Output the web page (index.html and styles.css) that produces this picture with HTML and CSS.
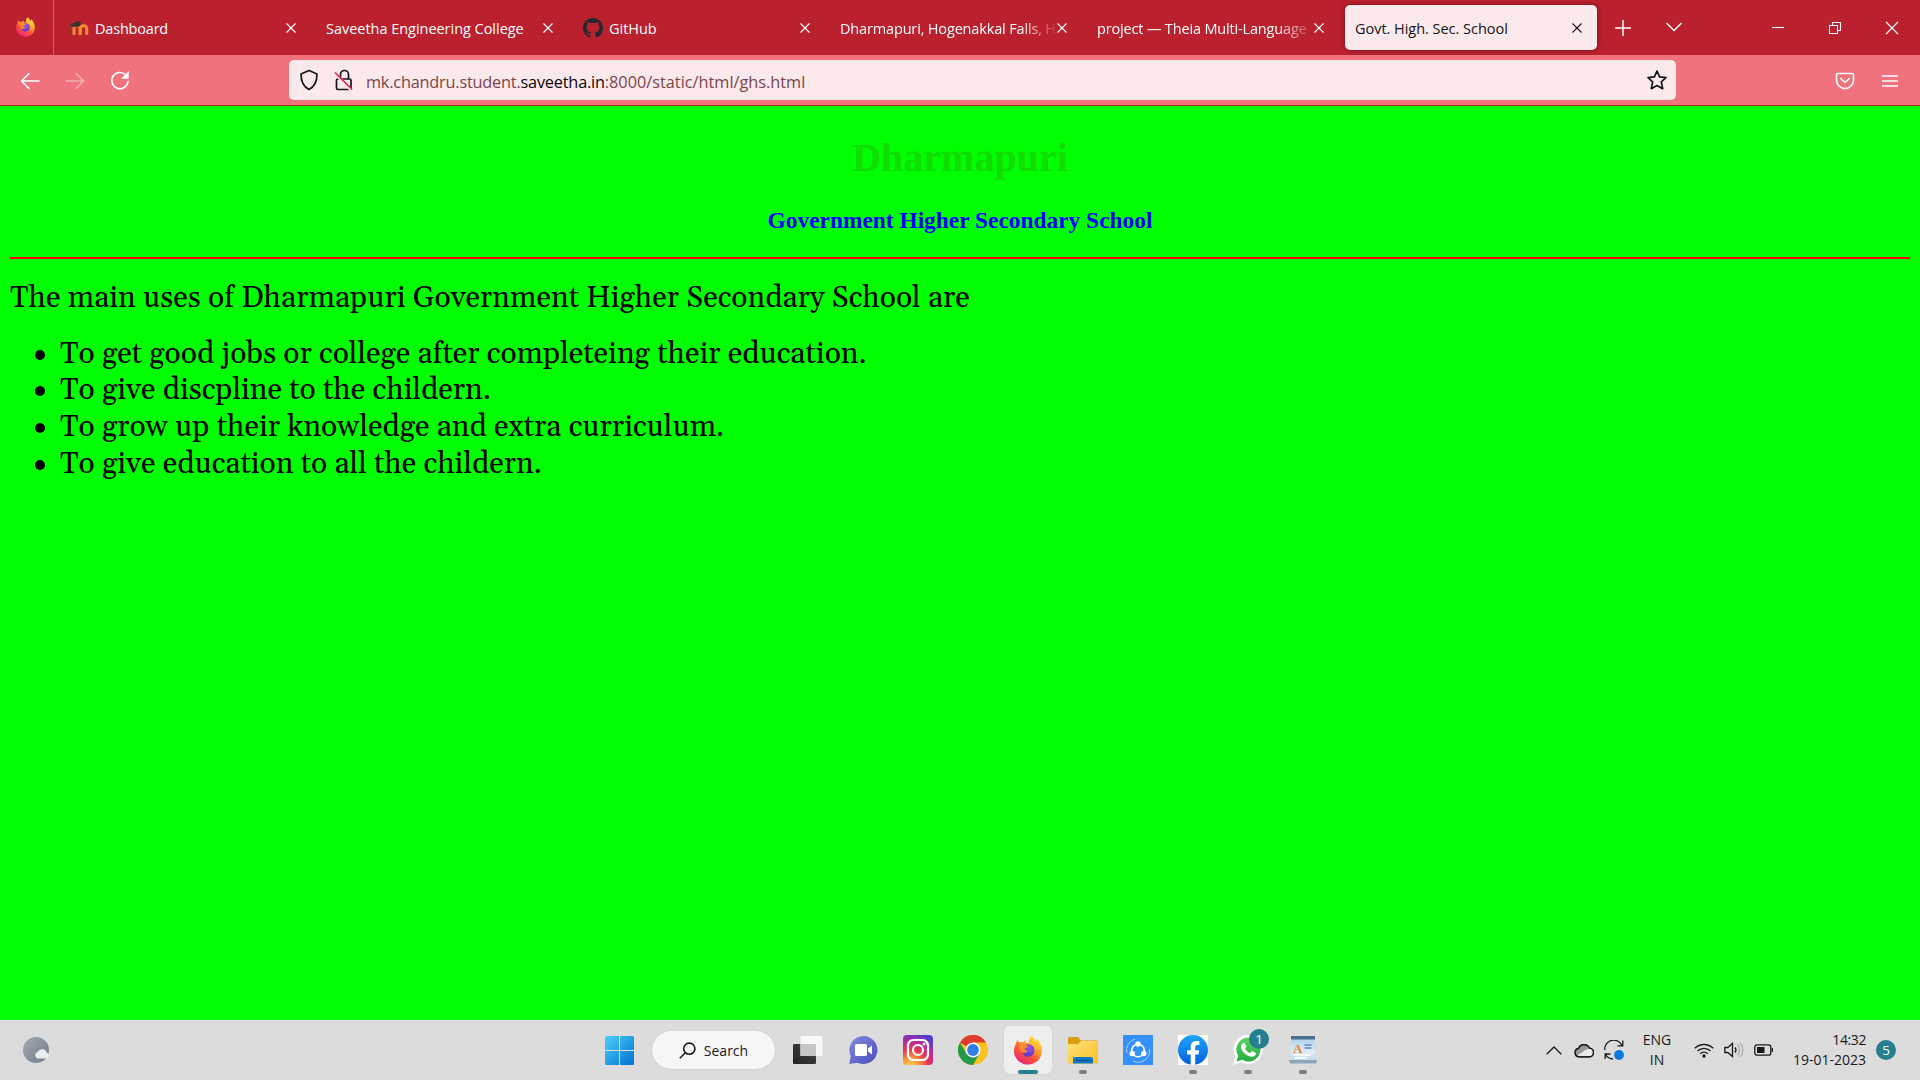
FILE: index.html
```
<!DOCTYPE html>
<html lang="en">
<head>
<meta charset="utf-8">
<title>Govt. High. Sec. School</title>
<link rel="stylesheet" href="styles.css">
</head>
<body>
<svg class="defs" width="0" height="0" aria-hidden="true">
  <defs>
    <linearGradient id="ffBody" x1=".85" y1="0" x2=".25" y2="1"><stop offset="0" stop-color="#fff14a"/><stop offset=".35" stop-color="#ffb02e"/><stop offset=".62" stop-color="#ff5a35"/><stop offset="1" stop-color="#e91e7b"/></linearGradient>
    <radialGradient id="ffGlobe" cx=".6" cy=".3" r=".8"><stop offset="0" stop-color="#a14be8"/><stop offset="1" stop-color="#4b3bc0"/></radialGradient>
    <linearGradient id="win" x1="0" y1="0" x2="1" y2="1"><stop offset="0" stop-color="#4fd0fb"/><stop offset="1" stop-color="#0070d0"/></linearGradient>
    <linearGradient id="chat" x1="0" y1="0" x2="1" y2="1"><stop offset="0" stop-color="#7f8be0"/><stop offset="1" stop-color="#4d4cb8"/></linearGradient>
    <radialGradient id="insta" cx=".25" cy="1.05" r="1.15"><stop offset="0" stop-color="#ffd25a"/><stop offset=".25" stop-color="#fb9a3a"/><stop offset=".5" stop-color="#e8354f"/><stop offset=".75" stop-color="#b52a9c"/><stop offset="1" stop-color="#4b3fd0"/></radialGradient>
    <linearGradient id="folder" x1="0" y1="0" x2="1" y2="1"><stop offset="0" stop-color="#ffe07a"/><stop offset="1" stop-color="#fcbf22"/></linearGradient>
    <linearGradient id="fb" x1="0" y1="0" x2="0" y2="1"><stop offset="0" stop-color="#1ba4f8"/><stop offset="1" stop-color="#0660e0"/></linearGradient>
    <linearGradient id="wa" x1="0" y1="0" x2="0" y2="1"><stop offset="0" stop-color="#5bd066"/><stop offset="1" stop-color="#25ae40"/></linearGradient>
    <linearGradient id="moon" x1="0" y1="0" x2="1" y2="1"><stop offset="0" stop-color="#a3abb3"/><stop offset="1" stop-color="#717b86"/></linearGradient>
    <linearGradient id="paper" x1="0" y1="0" x2="0" y2="1"><stop offset="0" stop-color="#a9cdea"/><stop offset=".6" stop-color="#dcebf6"/><stop offset="1" stop-color="#c3d8e8"/></linearGradient>
    <linearGradient id="dark" x1="0" y1="1" x2="1" y2="0"><stop offset="0" stop-color="#222"/><stop offset="1" stop-color="#484848"/></linearGradient>
    <symbol id="firefox" viewBox="0 0 30 30">
      <path fill="url(#ffBody)" d="M18 .5c2 1.200 3.500 3.300 4.300 5.500.8-.4 1.200-1.500 1.200-2.500 3.500 3 5.700 7.500 5.500 12.500C28.700 23.700 22.500 29.500 15 29.500S1 23.500 1 16c0-2.500.6-4.500 1.500-6 .2-2 1-3.800 2.400-5.200C5 6 5.500 6.800 6.300 7.400 7.500 7 8.800 7 10 7.300c.8-1 2-1.800 3.200-2.100-.8.8-1.100 1.800-1 2.600 1.400.1 2.800.1 3.600.4C15.500 5.500 16.200 2.500 18 .5z"/>
      <circle cx="15.200" cy="15.500" r="6.300" fill="url(#ffGlobe)"/>
      <path fill="#ff8a2a" d="M6 9.500c2-.6 4-.3 5.500.8 1.400.2 3 .1 4 .5-.6 1.700-2.400 2.300-4 2.700.3 1.500 1.800 2.400 3.500 2-1 1.900-3.300 2.700-5.500 2.200C6.500 16 5.500 12.500 6 9.500z"/>
    </symbol>
    <symbol id="close" viewBox="0 0 12 12"><path d="M1.500 1.500l9 9m0-9l-9 9" fill="none" stroke="currentColor" stroke-width="1.100"/></symbol>
  </defs>
</svg>

<header class="tabs">
  <div class="home"><svg width="21" height="20"><use href="#firefox"/></svg></div>
  <div class="tab">
    <svg width="20" height="14" viewBox="0 0 20 14"><path d="M5 13V7.500a3 3 0 0 1 6 0V13M11.500 13V7.500a3.200 3.200 0 0 1 6.300 0V13" fill="none" stroke="#ee8a2e" stroke-width="3"/><path d="M1 3.500L9 0l3 2-1.500 3.500L5 6z" fill="#3b3230"/><path d="M1.500 4v8" stroke="#86402c"/></svg>
    <span class="label dash">Dashboard</span><svg class="x" width="12" height="12"><use href="#close"/></svg>
  </div>
  <div class="tab"><span class="label">Saveetha Engineering College</span><svg class="x" width="12" height="12"><use href="#close"/></svg></div>
  <div class="tab">
    <svg width="20" height="20" viewBox="0 0 16 16"><path fill="#24292f" d="M8 0C3.580 0 0 3.580 0 8c0 3.540 2.290 6.530 5.470 7.590.4.070.55-.17.55-.38 0-.19-.01-.82-.01-1.490-2.010.37-2.530-.49-2.690-.94-.09-.23-.48-.94-.82-1.130-.28-.15-.68-.52-.01-.53.63-.01 1.080.58 1.230.82.72 1.210 1.870.87 2.330.66.070-.52.28-.87.51-1.070-1.780-.2-3.640-.89-3.640-3.950 0-.87.31-1.590.82-2.150-.08-.2-.36-1.020.08-2.120 0 0 .67-.21 2.200.82a7.600 7.600 0 0 1 4 0c1.530-1.040 2.200-.82 2.200-.82.44 1.100.16 1.920.08 2.120.51.56.82 1.270.82 2.150 0 3.070-1.870 3.750-3.650 3.950.29.25.54.73.54 1.480 0 1.070-.01 1.930-.01 2.200 0 .21.15.46.55.38A8.010 8.010 0 0 0 16 8c0-4.420-3.580-8-8-8z"/></svg>
    <span class="label">GitHub</span><svg class="x" width="12" height="12"><use href="#close"/></svg>
  </div>
  <div class="tab"><span class="label fade">Dharmapuri, Hogenakkal Falls, H</span><svg class="x" width="12" height="12"><use href="#close"/></svg></div>
  <div class="tab"><span class="label fade">project — Theia Multi-Language</span><svg class="x" width="12" height="12"><use href="#close"/></svg></div>
  <div class="tab active"><span class="label">Govt. High. Sec. School</span><svg class="x" width="12" height="12"><use href="#close"/></svg></div>
  <div class="new"><svg width="16" height="16" viewBox="0 0 16 16"><path d="M8 .5v15M.5 8h15"/></svg></div>
  <div class="all"><svg width="16" height="10" viewBox="0 0 16 10"><path d="M1 1.500l7 7 7-7"/></svg></div>
  <div class="controls">
    <div><svg width="14" height="14" viewBox="0 0 14 14"><path class="thin" d="M1 6.500h12"/></svg></div>
    <div><svg width="14" height="14" viewBox="0 0 14 14"><path class="thin" d="M1.500 4.500h8v8h-8zM4.500 4V1.500h8v8H10"/></svg></div>
    <div><svg width="14" height="14" viewBox="0 0 14 14"><path class="thin" d="M1 1l12 12M13 1L1 13"/></svg></div>
  </div>
</header>

<nav class="toolbar">
  <div class="btn"><svg width="20" height="18" viewBox="0 0 20 18"><path d="M19 9H2M9 1.500L1.500 9 9 16.500"/></svg></div>
  <div class="btn off"><svg width="20" height="18" viewBox="0 0 20 18"><path d="M1 9h17M11 1.500L18.500 9 11 16.500"/></svg></div>
  <div class="btn"><svg width="20" height="20" viewBox="0 0 20 20"><path d="M16 4.200A8.100 8.100 0 1 0 18 10.500"/><path class="fill" d="M18.500.8v6.700h-6.700z"/></svg></div>
  <div class="url">
    <svg class="shield" width="20" height="22" viewBox="0 0 20 22"><path d="M10 1.500L18 5c0 7-2 12.500-8 15.500C4 17.500 2 12 2 5z"/></svg>
    <svg class="lock" width="20" height="22" viewBox="0 0 20 22"><path d="M6.500 9.500V5.500a4 4 0 0 1 8 0v4M4 10h11.500a1.500 1.500 0 0 1 1.500 1.500V19a1.500 1.500 0 0 1-1.500 1.500H4A1.500 1.500 0 0 1 2.500 19v-7.500A1.500 1.500 0 0 1 4 10z"/><path d="M2 5.500L17 21"/><path d="M1 3.500L18 20.500"/></svg>
    <span class="addr"><span class="tight">mk.chandru.student.</span><b class="tight">saveetha.in</b>:8000/static/html/ghs.html</span>
    <svg class="star" width="22" height="22" viewBox="0 0 22 22"><path d="M11 2l2.600 5.800 6.400.8-4.700 4.200 1.400 6.900L11 16.500l-5.700 3.200 1.400-6.900L2 8.600l6.400-.8z"/></svg>
  </div>
  <div class="btn end"><svg width="20" height="18" viewBox="0 0 20 18"><path d="M3 1.500h14a1.500 1.500 0 0 1 1.500 1.500v5a8.500 8.500 0 0 1-17 0V3A1.500 1.500 0 0 1 3 1.500zM5.800 6.500L10 10.500l4.200-4"/></svg></div>
  <div class="btn"><svg width="16" height="14" viewBox="0 0 16 14"><path d="M.5 2h15M.5 7h15M.5 12h15"/></svg></div>
</nav>

<main class="page">
  <h1>Dharmapuri</h1>
  <h3>Government Higher Secondary School</h3>
  <hr>
  <p>The main uses of Dharmapuri Government Higher Secondary School are</p>
  <ul>
    <li>To get good jobs or college after completeing their education.</li>
    <li>To give discpline to the childern.</li>
    <li>To grow up their knowledge and extra curriculum.</li>
    <li>To give education to all the childern.</li>
  </ul>
</main>

<footer class="taskbar">
  <div class="weather"><svg width="30" height="28" viewBox="0 0 30 28"><circle cx="14" cy="14" r="13" fill="url(#moon)"/><path d="M15.500 22.500a3.400 3.400 0 0 1 0-6.500 5 5 0 0 1 9.300.8 2.900 2.900 0 0 1 0 5.700z" fill="#e9edf0"/></svg></div>
  <div class="app"><svg width="29" height="29" viewBox="0 0 29 29"><path fill="url(#win)" d="M1.500 0H14v14H0V1.500A1.500 1.500 0 0 1 1.500 0zM15 0h12.500A1.500 1.500 0 0 1 29 1.500V14H15zM0 15h14v14H1.500A1.500 1.500 0 0 1 0 27.500zM15 15h14v12.500a1.500 1.500 0 0 1-1.500 1.500H15z"/></svg></div>
  <div class="search"><svg width="17" height="17" viewBox="0 0 17 17"><circle cx="10.300" cy="6.700" r="5.600"/><path d="M6.300 10.700L.8 16.200"/></svg><span>Search</span></div>
  <div class="app"><svg width="30" height="30" viewBox="0 0 30 30"><rect x="0" y="9" width="23" height="20" rx="1" fill="url(#dark)"/><rect x="7.500" y="1" width="22" height="20" rx="1" fill="#f8f8f8"/><path d="M7.500 9H23v12H7.500z" fill="#c6c6c6"/></svg></div>
  <div class="app"><svg width="30" height="30" viewBox="0 0 30 30"><path d="M15.500 1a14 14 0 1 1-6 26.700L1.200 29l1.500-8A14 14 0 0 1 15.500 1z" fill="url(#chat)"/><rect x="7" y="9" width="12" height="12" rx="1.500" fill="#fff"/><path d="M20 13.500l4-3v9l-4-3z" fill="#fff"/></svg></div>
  <div class="app"><svg width="30" height="30" viewBox="0 0 30 30"><rect width="30" height="30" rx="4" fill="url(#insta)"/><g fill="none" stroke="#fff" stroke-width="2.200"><rect x="5" y="5" width="20" height="20" rx="5.500"/><circle cx="15" cy="15" r="5"/></g><circle cx="21" cy="9" r="1.500" fill="#fff"/></svg></div>
  <div class="app"><svg width="30" height="30" viewBox="0 0 30 30"><circle cx="15" cy="15" r="15" fill="#fcc31e"/><path d="M15 15L2 7.500A15 15 0 0 1 28 7.500H15z" fill="#e13b2e"/><path d="M2 7.500A15 15 0 0 0 15 30l6.500-11.300L15 15 8.500 18.700z" fill="#229a4a"/><circle cx="15" cy="15" r="7.500" fill="#fff"/><circle cx="15" cy="15" r="5.900" fill="#2f7de9"/></svg></div>
  <div class="app current run"><svg width="30" height="30"><use href="#firefox"/></svg></div>
  <div class="app run"><svg width="30" height="28" viewBox="0 0 30 28"><path d="M0 2.500A1.500 1.500 0 0 1 1.500 1H10l3 3.500h15.500A1.500 1.500 0 0 1 30 6v6H0z" fill="#dc9e10"/><path d="M0 8h10l3-3h15.500A1.500 1.500 0 0 1 30 6.500V26a1.500 1.500 0 0 1-1.500 1.500h-27A1.500 1.500 0 0 1 0 26z" fill="url(#folder)"/><path d="M5 27.500V23a2 2 0 0 1 2-2h16a2 2 0 0 1 2 2v4.500z" fill="#0f78c4"/><path d="M8 24.500h14" stroke="#0b4d86" stroke-width="1.200"/></svg></div>
  <div class="app"><svg width="30" height="30" viewBox="0 0 30 30"><path fill="#3590fb" d="M0 0h30v30H0z"/><g fill="none" stroke="#fff"><circle cx="15" cy="15.500" r="6.300" stroke-width="1.600"/><path d="M3.800 18A11.500 11.500 0 0 1 12 4.200M26.500 14A11.500 11.500 0 0 1 10 26" stroke="#a9d0fd"/></g><g fill="#fff"><circle cx="15" cy="9" r="2.700"/><circle cx="9.200" cy="18.500" r="2.700"/><circle cx="20.800" cy="18.500" r="2.700"/></g></svg></div>
  <div class="app run"><svg width="30" height="30" viewBox="0 0 30 30"><path fill="#fff" d="M0 0h30v30H0z"/><circle cx="15" cy="15" r="15" fill="url(#fb)"/><path fill="#fff" d="M12.700 30V19.500H9v-4.300h3.700V12c0-4 2.300-6 5.700-6 1.200 0 2.300.1 3 .3v3.800h-2c-1.700 0-2.200 1-2.200 2.200v2.900h4l-.7 4.300h-3.300V30z"/></svg></div>
  <div class="app run"><svg width="30" height="30" viewBox="0 0 30 30"><path fill="#fff" d="M15.500 0a14.500 14.500 0 1 1-7 27.300L0 30l2.500-8.200A14.500 14.500 0 0 1 15.500 0z"/><path fill="url(#wa)" d="M15.500 2.500a12 12 0 1 1-6.200 22.300L3.500 26.500l1.700-5.700A12 12 0 0 1 15.500 2.500z"/><path fill="#fff" d="M10.700 7.800c.6 0 1 0 1.300.8l1.200 2.800c.1.500-.1.900-1.300 2.200 1.200 2.300 2.800 3.700 5 4.700l1.700-1.900c.4-.4.700-.3 1.100-.1l2.800 1.400c.5.300.4 1 .2 1.800-.6 1.700-2.600 2.500-4.200 2.200-5-.9-8.800-4.500-10.300-8.300-.6-2.300.3-4.700 2.500-5.600z"/></svg><span class="count">1</span></div>
  <div class="app run"><svg width="28" height="30" viewBox="0 0 28 30"><path fill="url(#paper)" d="M2.500 2h23L27 26H1z"/><path fill="#4e6f90" d="M2 1h24v3.500H2z"/><path fill="#8fa5b8" d="M0 25h28l-1 3.500H1z"/><path d="M15.500 10h7M15.500 13h7" stroke="#5d88c8" stroke-width="1.500"/><path d="M5 20h17M5 23h13" stroke="#fff" stroke-width="1.500"/><text class="glyph" x="4" y="17.500">A</text></svg></div>
  <div class="tray">
    <div class="ti"><svg width="16" height="9" viewBox="0 0 16 9"><path d="M.7 8.300L8 1l7.300 7.300"/></svg></div>
    <div class="ti"><svg width="20" height="15" viewBox="0 0 20 15"><path d="M5 13.800a4.200 4.200 0 0 1-.5-8.300 6 6 0 0 1 11-.3 4.300 4.300 0 0 1-.5 8.600z" fill="#e8e8e8"/><path d="M1.500 11A4.200 4.200 0 0 1 4.500 5.500a6 6 0 0 1 11-.3l-4 1.800-7.500 5z" fill="#999" stroke="none"/><path d="M5 13.800a4.200 4.200 0 0 1-.5-8.300 6 6 0 0 1 11-.3 4.300 4.300 0 0 1-.5 8.600z"/></svg></div>
    <div class="ti"><svg width="20" height="20" viewBox="0 0 20 20"><path d="M.8 10A9 9 0 0 1 18 5.500M18.800.5v5.300h-5.300M1.200 19v-5H6.500M1.500 14.500A9 9 0 0 0 9 19"/><circle cx="15" cy="15" r="4.900" fill="#0a78dc" stroke="none"/></svg></div>
    <div class="lang">ENG<br>IN</div>
    <div class="ti wifi"><svg width="20" height="15" viewBox="0 0 20 15"><path d="M.8 5.300a13 13 0 0 1 18.400 0M3.500 8a9.200 9.200 0 0 1 13 0M6.200 10.700a5.400 5.400 0 0 1 7.600 0"/><circle cx="10" cy="13" r="1.700" fill="#1a1a1a" stroke="none"/></svg></div>
    <div class="ti vol"><svg width="20" height="16" viewBox="0 0 20 16"><path d="M.8 5.500h3L8.500 1.500v13L3.800 10.500h-3zM11 5.500a4 4 0 0 1 0 5"/><path d="M13.500 3a7 7 0 0 1 0 10M16 1a10 10 0 0 1 0 14"/></svg></div>
    <div class="ti"><svg width="20" height="12" viewBox="0 0 20 12"><rect x=".8" y=".8" width="16" height="10.400" rx="2.200"/><rect x="3" y="3" width="7.500" height="6" fill="#1a1a1a" stroke="none"/><path d="M18.300 4v4"/></svg></div>
    <div class="clock"><span class="time">14:32</span><br>19-01-2023</div>
    <div class="note">5</div>
  </div>
</footer>
</body>
</html>
```
FILE: styles.css
```
* { box-sizing: border-box; }
body {
  margin: 0;
  width: 1920px;
  height: 1080px;
  overflow: hidden;
  display: flex;
  flex-direction: column;
  font-family: "Open Sans", "Noto Sans", sans-serif;
}
svg { display: block; flex: none; }
.defs { position: absolute; }

/* tab strip */
.tabs {
  height: 55px;
  flex: none;
  display: flex;
  align-items: center;
  background: #bb202e;
  color: #fff;
}
.home {
  width: 54px;
  height: 55px;
  padding: 17px 0 0 15px;
  border-right: 1px solid #d5606b;
  margin-right: 6px;
}
.tab {
  width: 252px;
  height: 45px;
  margin-right: 5px;
  padding: 0 15px 0 9px;
  display: flex;
  align-items: center;
  font-size: 14.5px;
  border-radius: 5px;
}
.label { flex: 1; white-space: nowrap; letter-spacing: -.03px; padding-top: 1px; }
.label.dash { letter-spacing: -.2px; }
svg + .label { margin-left: 6px; }
.label.fade {
  letter-spacing: -.16px;
  -webkit-mask-image: linear-gradient(to right, #000 180px, rgba(0, 0, 0, .1) 215px);
  mask-image: linear-gradient(to right, #000 180px, rgba(0, 0, 0, .1) 215px);
}
.tab.active { padding: 0 14px 0 10px; background: #fbe9eb; color: #15141a; box-shadow: 0 0 5px rgba(60, 0, 10, .6); }
.new, .all, .controls div { display: flex; justify-content: center; align-items: center; }
.new { width: 42px; }
.all { width: 59px; padding-bottom: 2px; }
.controls { display: flex; margin-left: auto; }
.controls div { width: 57px; height: 53px; }
.tabs path { stroke-linecap: round; }
.new path, .all path, .controls path { fill: none; stroke: #fff; stroke-width: 1.5; }
.controls path.thin { stroke-width: 1.1; stroke-linecap: butt; }

/* navigation bar */
.toolbar {
  height: 51px;
  flex: none;
  display: flex;
  align-items: center;
  padding: 0 8px 0 7px;
  background: #ef727d;
  border-bottom: 1px solid #b52535;
}
.btn { width: 45px; padding-top: 1px; display: flex; justify-content: center; }
.btn.off { opacity: .4; }
.btn path { fill: none; stroke: #fff; stroke-width: 1.6; stroke-linecap: round; stroke-linejoin: round; }
.btn path.fill { fill: #fff; stroke-width: .5; }
.btn.end { margin-left: auto; }
.url {
  width: 1387px;
  height: 40px;
  margin-left: 147px;
  padding: 0 8px 0 10px;
  display: flex;
  align-items: center;
  border-radius: 5px;
  background: #fbe9eb;
}
.url path { fill: none; stroke: #15141a; stroke-width: 1.7; stroke-linejoin: round; }
.url .lock path:nth-child(2) { stroke: #fbe9eb; stroke-width: 3; }
.url .lock path:nth-child(3) { stroke: #e22850; }
.lock { margin-left: 15px; }
.addr { flex: 1; margin-left: 12px; padding-top: 4px; font-size: 16.3px; color: #7d434b; white-space: nowrap; }
.addr b { font-weight: 400; color: #0c0406; }
.addr .tight { letter-spacing: -.2px; }

/* web page */
.page { flex: 1; background: #0f0; padding: 2px 10px 0; display: flow-root; }
h1, h3 { font-family: "Liberation Serif", "Times New Roman", serif; text-align: center; }
h1 { margin: 27px 0; font-size: 40px; line-height: 45px; color: #1d0; }
h3 { margin: 27px 0 23px; font-size: 23.4px; line-height: 27px; color: #00f; }
hr { margin: 0; height: 2px; border: 0; background: #f00; }
p, ul { font-family: Gelasio, Georgia, "Liberation Serif", serif; font-size: 30px; line-height: 36.67px; color: #000; }
p { margin: 21px 0 19px; }
ul { margin: 0; padding: 0 0 0 25px; list-style: none; }
li { display: flex; align-items: center; }
li::before { content: ""; width: 10px; height: 10px; margin: 1px 15px 0 0; border-radius: 50%; background: #000; }

/* taskbar */
.taskbar {
  height: 60px;
  flex: none;
  display: flex;
  align-items: center;
  background: #dcdcdc;
  color: #1a1a1a;
}
.weather { width: 592px; padding-left: 22px; }
.app { position: relative; width: 55px; height: 48px; display: flex; align-items: center; justify-content: center; }
.search {
  width: 123px;
  height: 38px;
  margin: 0 5px;
  display: flex;
  align-items: center;
  justify-content: center;
  gap: 8px;
  border-radius: 19px;
  background: #f6f6f6;
  box-shadow: 0 0 1px #aaa;
  font-size: 14px;
}
.search circle, .search path { fill: none; stroke: #1a1a1a; stroke-width: 1.6; }
.current { width: 48px; margin: 0 3px 0 4px; border-radius: 5px; background: #eee; box-shadow: 0 0 1px #aaa; }
.run::after {
  content: "";
  position: absolute;
  bottom: 0;
  left: 50%;
  width: 8px;
  height: 4px;
  margin-left: -4px;
  border-radius: 2px;
  background: #7d7d7d;
}
.current::after { width: 20px; margin-left: -10px; background: #24808f; }
.count, .note {
  width: 20px;
  height: 20px;
  border-radius: 50%;
  background: #24808f;
  color: #fff;
  text-align: center;
  font-size: 13.5px;
  line-height: 20px;
}
.count { position: absolute; left: 29px; top: 3px; }
.glyph { font: bold 13px "Liberation Serif", serif; fill: #ef8527; }
.tray { margin-left: auto; display: flex; align-items: center; padding-right: 24px; font-size: 14px; line-height: 20px; }
.ti { width: 30px; display: flex; justify-content: center; }
.ti path, .ti rect { stroke: #1a1a1a; stroke-width: 1.3; }
.ti path:not([fill]), .ti rect:not([fill]) { fill: none; }
.ti [stroke="none"] { stroke: none; }
.ti.vol path:last-child { stroke: #aaa; }
.lang { width: 56px; text-align: center; }
.wifi { margin-left: 4px; }
.clock { width: 87px; text-align: right; margin-right: 10px; }
.time { letter-spacing: -.4px; }
```
